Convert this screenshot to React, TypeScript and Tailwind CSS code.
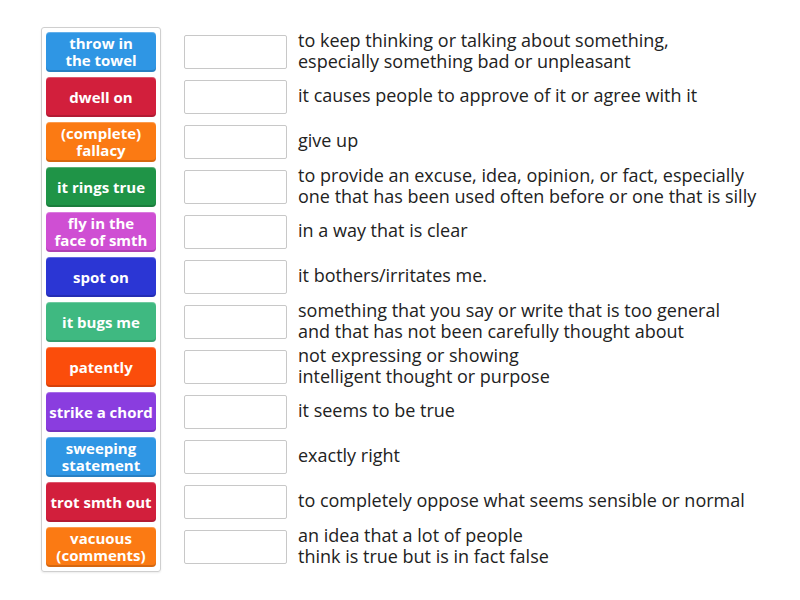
const items: { term: string; color: string; def: string[] }[] = [
  { term: "throw in the towel", color: "bg-[#2f96e4]", def: ["to keep thinking or talking about something,", "especially something bad or unpleasant"] },
  { term: "dwell on", color: "bg-[#d21f3c]", def: ["it causes people to approve of it or agree with it"] },
  { term: "(complete) fallacy", color: "bg-[#fb7a13]", def: ["give up"] },
  { term: "it rings true", color: "bg-[#1f9447]", def: ["to provide an excuse, idea, opinion, or fact, especially", "one that has been used often before or one that is silly"] },
  { term: "fly in the face of smth", color: "bg-[#cf4fd3]", def: ["in a way that is clear"] },
  { term: "spot on", color: "bg-[#2b36d4]", def: ["it bothers/irritates me."] },
  { term: "it bugs me", color: "bg-[#3fb981]", def: ["something that you say or write that is too general", "and that has not been carefully thought about"] },
  { term: "patently", color: "bg-[#fb4d0b]", def: ["not expressing or showing", "intelligent thought or purpose"] },
  { term: "strike a chord", color: "bg-[#8a3ddf]", def: ["it seems to be true"] },
  { term: "sweeping statement", color: "bg-[#2f96e4]", def: ["exactly right"] },
  { term: "trot smth out", color: "bg-[#d21f3c]", def: ["to completely oppose what seems sensible or normal"] },
  { term: "vacuous (comments)", color: "bg-[#fb7a13]", def: ["an idea that a lot of people", "think is true but is in fact false"] },
];

const App = () => {
  return (
    <div className="w-[800px] h-[600px] bg-white pt-[27px] pl-[41px] flex items-start font-['Open_Sans',sans-serif]">
      {/* Terms */}
      <div className="w-[120px] border border-[#cfcfcf] rounded-[3px] p-[4px] flex flex-col gap-[5px] shadow-[0_1px_2px_rgba(0,0,0,0.08)]">
        {items.map((it) => (
          <div
            key={it.term}
            className={`${it.color} h-[40px] rounded-[4px] flex items-center justify-center text-center text-balance text-white font-bold text-[15px] leading-[17px] px-[3px] shadow-[inset_0_1px_0_rgba(255,255,255,0.25),inset_0_-2px_0_rgba(0,0,0,0.15)]`}
          >
            {it.term}
          </div>
        ))}
      </div>

      {/* Answer rows */}
      <div className="pt-[5px] flex flex-col gap-[5px]">
        {items.map((it) => (
          <div key={it.term} className="h-[40px] flex items-center">
            <div className="ml-[23px] w-[103px] h-[34px] shrink-0 border border-[#c8c8c8] rounded-[2px] bg-white" />
            <div className="ml-[11px] mb-[3px] text-[18px] leading-[21px] text-[#222]">
              {it.def.map((line) => (
                <div key={line}>{line}</div>
              ))}
            </div>
          </div>
        ))}
      </div>
    </div>
  );
};

export default App;
